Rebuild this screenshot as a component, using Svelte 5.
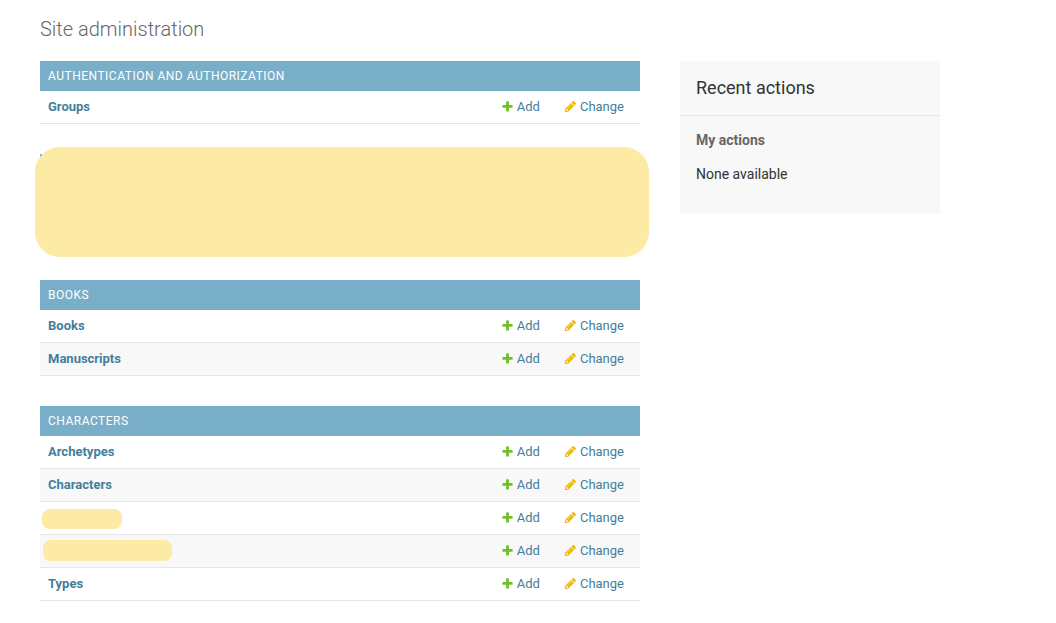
<script>
  const modules = [
    { name: 'Authentication and Authorization', models: [{ name: 'Groups' }] },
    { name: '', hidden: true, models: [] },
    { name: 'Books', models: [{ name: 'Books' }, { name: 'Manuscripts' }] },
    {
      name: 'Characters',
      models: [
        { name: 'Archetypes' },
        { name: 'Characters' },
        { name: '', mask: 'short' },
        { name: '', mask: 'long' },
        { name: 'Types' }
      ]
    }
  ];
</script>

<main>
  <h1>Site administration</h1>
  <div class="columns">
    <div class="modules">
      {#each modules as mod}
        {#if mod.hidden}
          <section class="module hidden-module">
            <div class="bar"></div>
            <div class="cover"></div>
          </section>
        {:else}
          <table class="module">
            <caption><a href="#app">{mod.name}</a></caption>
            <tbody>
              {#each mod.models as model}
                <tr>
                  <th scope="row">
                    {#if model.mask}
                      <span class="mask {model.mask}"></span>
                    {:else}
                      <a href="#app">{model.name}</a>
                    {/if}
                  </th>
                  <td>
                    <a class="action" href="#app">
                      <svg viewBox="0 0 1792 1792" aria-hidden="true"><path fill="#70bf2b" d="M1600 796v192q0 40-28 68t-68 28h-416v416q0 40-28 68t-68 28H800q-40 0-68-28t-28-68v-416H288q-40 0-68-28t-28-68V796q0-40 28-68t68-28h416V284q0-40 28-68t68-28h192q40 0 68 28t28 68v416h416q40 0 68 28t28 68z" /></svg>
                      <span>Add</span>
                    </a>
                  </td>
                  <td class="last">
                    <a class="action" href="#app">
                      <svg viewBox="0 0 1792 1792" aria-hidden="true"><path fill="#efb80b" d="M491 1536l91-91-235-235-91 91v107h128v128h107zm523-928q0-22-22-22-10 0-17 7l-542 542q-7 7-7 17 0 22 22 22 10 0 17-7l542-542q7-7 7-17zm-54-192l416 416-832 832H128v-416zm683 96q0 53-37 90l-166 166-416-416 166-165q36-38 90-38 53 0 91 38l235 234q37 39 37 91z" /></svg>
                      <span>Change</span>
                    </a>
                  </td>
                </tr>
              {/each}
            </tbody>
          </table>
        {/if}
      {/each}
    </div>
    <aside>
      <h2>Recent actions</h2>
      <h3>My actions</h3>
      <p>None available</p>
    </aside>
  </div>
</main>

<style>
  :global(body) {
    margin: 0;
    background: #fff;
    color: #333;
    font-family: Roboto, "Liberation Sans", sans-serif;
    font-size: 14px;
  }
  main {
    padding: 18px 40px 0;
  }
  h1 {
    margin: 0 0 20px;
    font-size: 20px;
    line-height: 23px;
    font-weight: 300;
    color: #666;
  }
  .columns {
    display: flex;
    align-items: flex-start;
    gap: 40px;
  }
  .modules {
    flex: 0 1 600px;
    display: flex;
    flex-direction: column;
    gap: 30px;
  }
  .module {
    width: 100%;
    border-collapse: separate;
    border-spacing: 0;
  }
  caption {
    padding: 8px;
    background: #79aec8;
    text-align: left;
    text-transform: uppercase;
    font-size: 12px;
    line-height: 14px;
    font-weight: 400;
    letter-spacing: 0.5px;
  }
  a {
    color: #447e9b;
    text-decoration: none;
  }
  caption a {
    color: #fff;
  }
  th,
  td {
    padding: 8px;
    border-bottom: 1px solid #e6e6e6;
    font-size: 13px;
    line-height: 16px;
    text-align: left;
    white-space: nowrap;
  }
  th {
    width: 100%;
    font-weight: 700;
    position: relative;
  }
  td.last {
    padding: 8px 16px;
  }
  tr:nth-child(even) {
    background: #f8f8f8;
  }
  .action {
    display: flex;
    align-items: center;
    gap: 3px;
  }
  svg {
    width: 13px;
    height: 13px;
    margin-bottom: 1px;
    flex: none;
  }
  .hidden-module {
    position: relative;
    height: 96px;
  }
  .bar {
    height: 30px;
    background: #79aec8;
  }
  .cover {
    position: absolute;
    inset: -7px -9px -7px -5px;
    border-radius: 25px;
    background: #fceaa5;
  }
  .mask {
    position: absolute;
    height: 20px;
    border-radius: 8px;
    background: #fceaa5;
  }
  .short {
    left: 2px;
    top: 7px;
    width: 80px;
  }
  .long {
    left: 3px;
    top: 5px;
    width: 129px;
    height: 21px;
  }
  aside {
    flex: 0 1 260px;
    padding-bottom: 31px;
    background: #f8f8f8;
  }
  h2 {
    margin: 0 0 16px;
    padding: 16px;
    border-bottom: 1px solid #e6e6e6;
    font-size: 18px;
    line-height: 22px;
    font-weight: 400;
  }
  h3 {
    margin: 0 16px 16px;
    font-size: 14px;
    line-height: 17px;
    font-weight: 700;
    color: #666;
  }
  p {
    margin: 0 16px;
    line-height: 18px;
  }
</style>
